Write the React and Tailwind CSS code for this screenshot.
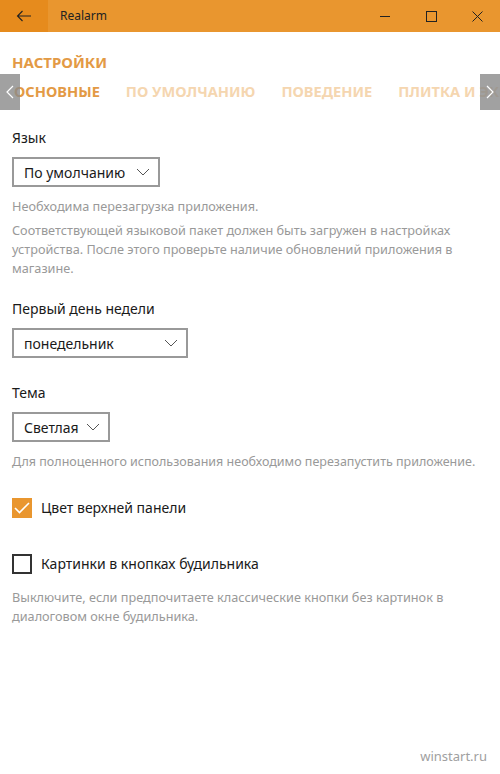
import { useState } from "react";

function Select({ value, width }) {
  return (
    <div
      className={`flex h-[30px] items-center justify-between border-2 border-[#999999] pl-[10px] pr-[8px] text-[14px] text-[#1a1a1a] ${width}`}
    >
      <span>{value}</span>
      <svg width="14" height="8" viewBox="0 0 14 8" fill="none">
        <path d="M1 1l6 6 6-6" stroke="#555" strokeWidth="1" />
      </svg>
    </div>
  );
}

function Checkbox({ checked, label, onClick }) {
  return (
    <button onClick={onClick} className="flex items-center gap-[9px] text-left">
      {checked ? (
        <span className="flex h-[20px] w-[20px] items-center justify-center bg-[#e9962f]">
          <svg width="16" height="12" viewBox="0 0 16 12" fill="none">
            <path d="M1 6l4.5 4.5L15 1" stroke="#fff" strokeWidth="1.6" />
          </svg>
        </span>
      ) : (
        <span className="h-[20px] w-[20px] border-2 border-[#333333]" />
      )}
      <span className="text-[14px] text-[#1a1a1a]">{label}</span>
    </button>
  );
}

export default function App() {
  const [topColor, setTopColor] = useState(true);
  const [pictures, setPictures] = useState(false);

  const tabs = ["ОСНОВНЫЕ", "ПО УМОЛЧАНИЮ", "ПОВЕДЕНИЕ", "ПЛИТКА И ЭКРАН"];

  return (
    <div
      className="relative h-[774px] w-[500px] overflow-hidden bg-white"
      style={{ fontFamily: '"Noto Sans", "Open Sans", sans-serif' }}
    >
      {/* Заголовок окна */}
      <div className="flex h-[32px] items-center bg-[#e9962f]">
        <div className="flex h-full w-[48px] items-center justify-center bg-[#e68b1d]">
          <svg width="16" height="12" viewBox="0 0 16 12" fill="none">
            <path d="M15 6H1.5M6.5 1L1.5 6l5 5" stroke="#222" strokeWidth="1.1" />
          </svg>
        </div>
        <span className="ml-[12px] text-[12px] text-[#222]">Realarm</span>
        <div className="ml-auto flex h-full">
          <div className="flex w-[46px] items-center justify-center">
            <span className="h-px w-[10px] bg-[#222]" />
          </div>
          <div className="flex w-[46px] items-center justify-center">
            <span className="h-[11px] w-[11px] border border-[#222]" />
          </div>
          <div className="flex w-[46px] items-center justify-center">
            <svg width="11" height="11" viewBox="0 0 11 11" fill="none">
              <path d="M0.5 0.5l10 10M10.5 0.5l-10 10" stroke="#222" strokeWidth="1" />
            </svg>
          </div>
        </div>
      </div>

      {/* Настройки */}
      <div className="pt-[20px]">
        <div className="px-[12px] text-[15px] font-bold leading-[20px] text-[#e39a45]">
          НАСТРОЙКИ
        </div>
        <div className="relative mt-[2px] h-[36px] overflow-hidden">
          <div className="flex h-full items-center gap-[26px] whitespace-nowrap pl-[14px] text-[14.6px] font-bold">
            {tabs.map((t, i) => (
              <span key={t} className={i === 0 ? "text-[#e39a45]" : "text-[#f5d6b0]"}>
                {t}
              </span>
            ))}
          </div>
          <div className="absolute left-0 top-0 flex h-full w-[20px] items-center justify-center bg-[#8a8a8a]/80">
            <svg width="8" height="14" viewBox="0 0 8 14" fill="none">
              <path d="M7 1L1 7l6 6" stroke="#fff" strokeWidth="1.2" />
            </svg>
          </div>
          <div className="absolute right-0 top-0 flex h-full w-[20px] items-center justify-center bg-[#8a8a8a]/80">
            <svg width="8" height="14" viewBox="0 0 8 14" fill="none">
              <path d="M1 1l6 6-6 6" stroke="#fff" strokeWidth="1.2" />
            </svg>
          </div>
        </div>

        <div className="px-[12px] pt-[18px]">
          <div className="text-[14px] leading-[20px] text-[#1a1a1a]">Язык</div>
          <div className="mt-[9px]">
            <Select value="По умолчанию" width="w-[148px]" />
          </div>
          <p className="mt-[10px] text-[12.7px] leading-[19px] text-[#999999]">
            Необходима перезагрузка приложения.
          </p>
          <p className="mt-[5px] text-[12.7px] leading-[19px] text-[#999999]">
            Соответствующей языковой пакет должен быть загружен в настройках устройства. После этого
            проверьте наличие обновлений приложения в магазине.
          </p>

          <div className="mt-[21px] text-[14px] leading-[20px] text-[#1a1a1a]">Первый день недели</div>
          <div className="mt-[9px]">
            <Select value="понедельник" width="w-[176px]" />
          </div>

          <div className="mt-[25px] text-[14px] leading-[20px] text-[#1a1a1a]">Тема</div>
          <div className="mt-[9px]">
            <Select value="Светлая" width="w-[98px]" />
          </div>
          <p className="mt-[10px] whitespace-nowrap text-[12.5px] leading-[19px] text-[#999999]">
            Для полноценного использования необходимо перезапустить приложение.
          </p>

          <div className="mt-[26px]">
            <Checkbox checked={topColor} label="Цвет верхней панели" onClick={() => setTopColor(!topColor)} />
          </div>
          <div className="mt-[35px]">
            <Checkbox checked={pictures} label="Картинки в кнопках будильника" onClick={() => setPictures(!pictures)} />
          </div>
          <p className="mt-[14px] text-[12.7px] leading-[19px] text-[#999999]">
            Выключите, если предпочитаете классические кнопки без картинок в диалоговом окне
            будильника.
          </p>
        </div>
      </div>

      <div className="absolute bottom-[8px] right-[13px] text-[13px] text-[#a0a0a0]">winstart.ru</div>
    </div>
  );
}
